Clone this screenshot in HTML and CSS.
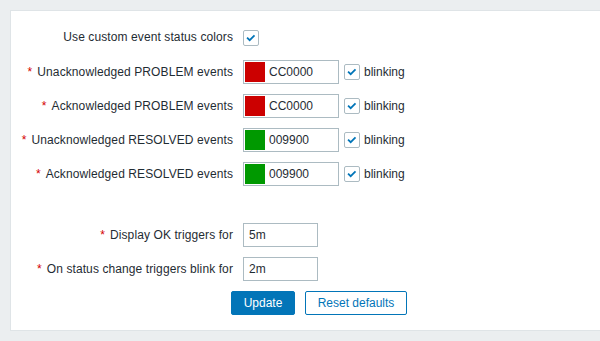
FILE: index.html
```html
<!DOCTYPE html>
<html>
<head>
<meta charset="utf-8">
<link rel="stylesheet" href="styles.css">
</head>
<body>
<div class="panel">
  <div class="form">
    <div class="label">Use custom event status colors</div>
    <div class="field"><span class="cb"><svg viewBox="0 0 16 16" width="14" height="14"><path d="M3.5 7.5 L6.5 10.5 L12 5" fill="none" stroke="#0275b8" stroke-width="2"/></svg></span></div>

    <div class="label"><span class="req">*</span>Unacknowledged PROBLEM events</div>
    <div class="field"><span class="color"><span class="sw red"></span>CC0000</span><span class="cb"><svg viewBox="0 0 16 16" width="14" height="14"><path d="M3.5 7.5 L6.5 10.5 L12 5" fill="none" stroke="#0275b8" stroke-width="2"/></svg></span><span class="cbl">blinking</span></div>

    <div class="label"><span class="req">*</span>Acknowledged PROBLEM events</div>
    <div class="field"><span class="color"><span class="sw red"></span>CC0000</span><span class="cb"><svg viewBox="0 0 16 16" width="14" height="14"><path d="M3.5 7.5 L6.5 10.5 L12 5" fill="none" stroke="#0275b8" stroke-width="2"/></svg></span><span class="cbl">blinking</span></div>

    <div class="label"><span class="req">*</span>Unacknowledged RESOLVED events</div>
    <div class="field"><span class="color"><span class="sw green"></span>009900</span><span class="cb"><svg viewBox="0 0 16 16" width="14" height="14"><path d="M3.5 7.5 L6.5 10.5 L12 5" fill="none" stroke="#0275b8" stroke-width="2"/></svg></span><span class="cbl">blinking</span></div>

    <div class="label"><span class="req">*</span>Acknowledged RESOLVED events</div>
    <div class="field"><span class="color"><span class="sw green"></span>009900</span><span class="cb"><svg viewBox="0 0 16 16" width="14" height="14"><path d="M3.5 7.5 L6.5 10.5 L12 5" fill="none" stroke="#0275b8" stroke-width="2"/></svg></span><span class="cbl">blinking</span></div>

    <div class="spacer"></div>

    <div class="label"><span class="req">*</span>Display OK triggers for</div>
    <div class="field"><span class="text">5m</span></div>

    <div class="label"><span class="req">*</span>On status change triggers blink for</div>
    <div class="field"><span class="text">2m</span></div>
  </div>
  <div class="buttons">
    <button class="btn primary">Update</button>
    <button class="btn alt">Reset defaults</button>
  </div>
</div>
</body>
</html>
```
FILE: styles.css
```css
html, body {
  margin: 0;
  padding: 0;
}
body {
  background: #ebeef0;
  padding: 10px 0 0 10px;
  height: 341px;
  box-sizing: border-box;
  overflow: hidden;
  font-family: "Liberation Sans", Arial, sans-serif;
  font-size: 12px;
  color: #1f2c33;
}
.panel {
  background: #ffffff;
  border: 1px solid #dfe4e7;
  border-right: none;
  padding: 14px 0 15px 0;
}
.form {
  display: grid;
  grid-template-columns: 222px 1fr;
  column-gap: 10px;
  row-gap: 10px;
}
.label {
  text-align: right;
  line-height: 24px;
  height: 24px;
  white-space: nowrap;
  letter-spacing: 0.1px;
}
.req {
  color: #d40000;
  margin-right: 5px;
}
.field {
  display: flex;
  align-items: center;
  height: 24px;
}
.form > .label:first-child {
  height: 25px;
  line-height: 25px;
}
.form > .label:first-child + .field {
  height: 25px;
}
.cb {
  width: 16px;
  height: 16px;
  box-sizing: border-box;
  border: 1px solid #acbbc2;
  border-radius: 2px;
  background: #fff;
  display: flex;
  align-items: center;
  justify-content: center;
}
.cbl {
  margin-left: 4px;
}
.color {
  width: 96px;
  height: 24px;
  box-sizing: border-box;
  border: 1px solid #acbbc2;
  display: flex;
  align-items: center;
  padding-left: 1px;
  margin-right: 5px;
}
.sw {
  width: 20px;
  height: 20px;
  margin-right: 4px;
}
.sw.red { background: #cc0000; }
.sw.green { background: #009900; }
.spacer {
  grid-column: 1 / 3;
  height: 17px;
}
.text {
  width: 75px;
  height: 24px;
  box-sizing: border-box;
  border: 1px solid #acbbc2;
  padding-left: 5px;
  line-height: 22px;
}
.buttons {
  display: flex;
  gap: 10px;
  padding-left: 220px;
  margin-top: 10px;
}
.btn {
  height: 24px;
  box-sizing: border-box;
  font-family: "Liberation Sans", Arial, sans-serif;
  font-size: 12px;
  border-radius: 2px;
  padding: 0;
  margin: 0;
}
.primary {
  width: 64px;
  background: #0275b8;
  border: 1px solid #0275b8;
  color: #fff;
}
.alt {
  width: 102px;
  background: #fff;
  border: 1px solid #0275b8;
  color: #0275b8;
}
```
